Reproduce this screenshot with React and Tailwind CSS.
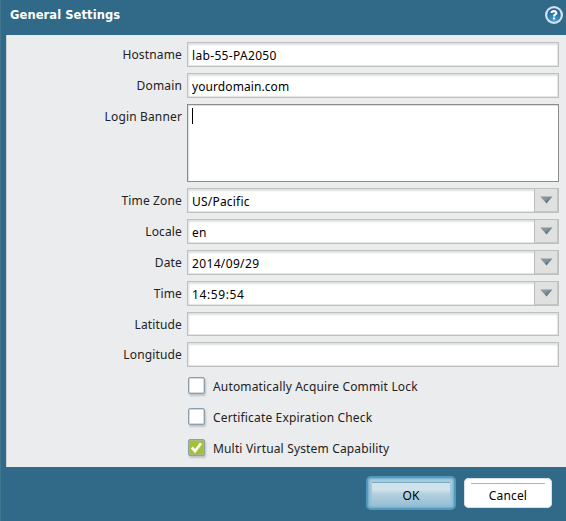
import { useState } from 'react';

const fieldBase = 'w-[372px] border border-[#bebfbf] bg-white shadow-[inset_1px_2px_2px_#e0e0e0,inset_-1px_-1px_1px_#e4e4e4]';

const Row = ({ label, height = 'h-[25px]', children }) => (
    <div className={`flex ${height}`}>
        <label className="w-[175px] mr-[5px] shrink-0 pt-px text-right leading-6 text-[#222]">{label}</label>
        <div className="flex h-full">{children}</div>
    </div>
);

const TextField = ({ value = '', tracking = '' }) => (
    <input defaultValue={value} className={`${fieldBase} h-full px-1 pt-px text-black outline-none ${tracking}`} />
);

const SelectField = ({ value, tracking = '' }) => (
    <div className={`${fieldBase} flex h-full text-black`}>
        <span className={`flex-1 pl-1 pt-px leading-6 ${tracking}`}>{value}</span>
        <button className="flex h-full w-6 items-start justify-center border-r border-b border-l border-[#c4c5c5] border-l-[#bcbdbd] bg-[#e0e0e0] pt-[7px]">
            <svg width="13" height="8" viewBox="0 0 13 8">
                <defs>
                    <linearGradient id="arrow" x1="0" y1="0" x2="1" y2="1">
                        <stop offset="0.4" stopColor="#84969f" />
                        <stop offset="0.8" stopColor="#4c6678" />
                    </linearGradient>
                </defs>
                <path d="M0.3 0.5h12.2L6.5 7.4z" fill="url(#arrow)" />
            </svg>
        </button>
    </div>
);

const CheckRow = ({ label, checked, onToggle }) => (
    <button onClick={onToggle} className="flex h-[18px] items-start tracking-[0.16px] text-[#222]">
        <span className={`flex h-[17px] w-[17px] items-center justify-center rounded-[2px] border border-[#8d9fab] shadow-[1px_2px_2px_#bfc3c5,inset_0_0_0_0.5px_#a9b6be] ${checked ? 'bg-[#a4c136]' : 'bg-white'}`}>
            {checked && (
                <svg width="13" height="13" viewBox="0 0 13 13" className="shrink-0">
                    <path d="M1.8 6.5l3.2 3.7L11 2.3" fill="none" stroke="#fff" strokeWidth="2.7" />
                </svg>
            )}
        </span>
        <span className="ml-2 pt-px leading-[18px]">{label}</span>
    </button>
);

const HelpIcon = () => (
    <svg width="18" height="18" viewBox="0 0 18 18">
        <defs>
            <radialGradient id="help" cx="0.5" cy="0.9" r="0.85">
                <stop offset="0" stopColor="#43a2d2" />
                <stop offset="1" stopColor="#205b91" />
            </radialGradient>
        </defs>
        <circle cx="9" cy="9" r="9" fill="#d3e0ed" />
        <circle cx="9" cy="9" r="6.8" fill="url(#help)" />
        <path d="M6.4 7C6.6 4.6 11.4 4.4 11.4 6.9c0 1.7-2.4 1.5-2.4 3.5M9 11.5v2" fill="none" stroke="#fff" strokeWidth="2.1" />
    </svg>
);

const App = () => {
    const [checks, setChecks] = useState([
        { label: 'Automatically Acquire Commit Lock', on: false },
        { label: 'Certificate Expiration Check', on: false },
        { label: 'Multi Virtual System Capability', on: true },
    ]);

    const toggle = (index) => setChecks(checks.map((c, i) => (i === index ? { ...c, on: !c.on } : c)));

    return (
        <div className="flex h-[521px] w-[566px] flex-col overflow-hidden border-l border-[#41768f] bg-[#306a88] font-['Noto_Sans','Liberation_Sans',sans-serif] text-[12px] tracking-[0.15px]">
            <header className="flex h-[35px] shrink-0 items-start justify-between pl-[9px] pr-[3px] pt-[6px]">
                <h1 className="font-['DejaVu_Sans',sans-serif] text-[11.5px] leading-[18px] font-bold tracking-[0.08px] text-white">General Settings</h1>
                <HelpIcon />
            </header>

            <main className="ml-[5px] h-[432px] shrink-0 border-l border-[#cfd0d1] bg-[#ebecee] pt-[7px]">
                <div className="flex flex-col gap-[6px]">
                    <Row label="Hostname"><TextField value="lab-55-PA2050" tracking="tracking-[0.33px]" /></Row>
                    <Row label="Domain"><TextField value="yourdomain.com" tracking="tracking-[0.08px]" /></Row>
                    <Row label="Login Banner" height="h-[78px]">
                        <div className="w-[372px] border border-[#8c8c8c] bg-white pl-1 pt-[3px] shadow-[inset_1px_1px_1px_#dcdcdc]">
                            <div className="h-4 w-px bg-black" />
                        </div>
                    </Row>
                    <Row label="Time Zone"><SelectField value="US/Pacific" tracking="tracking-[0.2px]" /></Row>
                    <Row label="Locale"><SelectField value="en" /></Row>
                    <Row label="Date"><SelectField value="2014/09/29" tracking="tracking-[0.35px]" /></Row>
                    <Row label="Time"><SelectField value="14:59:54" tracking="tracking-[0.6px]" /></Row>
                    <Row label="Latitude" height="h-6"><TextField /></Row>
                    <Row label="Longitude"><TextField /></Row>
                </div>
                <div className="ml-[181px] mt-[10px] flex flex-col gap-[13px]">
                    {checks.map((c, i) => (
                        <CheckRow key={c.label} label={c.label} checked={c.on} onToggle={() => toggle(i)} />
                    ))}
                </div>
            </main>

            <footer className="flex justify-end gap-2 pr-[14px] pt-[9px]">
                <button className="h-[34px] w-[90px] rounded-[5px] border-2 border-[#529abd] bg-linear-to-b from-[#a9cfe0] to-[#94bfd4] px-1 pt-1 pb-[3px] text-black shadow-[inset_0_0_2px_1px_#72aac6]">
                    <span className="block h-full border-t border-[#7ba9bf] bg-linear-to-b from-[#d0e3ec] from-30% via-[#b4d0de] via-50% to-[#98c0d4] pt-[3px] leading-[20px]">OK</span>
                </button>
                <button className="mt-[2px] h-[30px] w-[88px] rounded-[5px] bg-white px-[7px] pt-[5px] text-black shadow-[inset_0_0_1px_1px_#d5dfe8]">
                    <span className="block h-[25px] border-t border-[#a4b7c5] pt-px leading-[22px]">Cancel</span>
                </button>
            </footer>
        </div>
    );
};

export default App;
